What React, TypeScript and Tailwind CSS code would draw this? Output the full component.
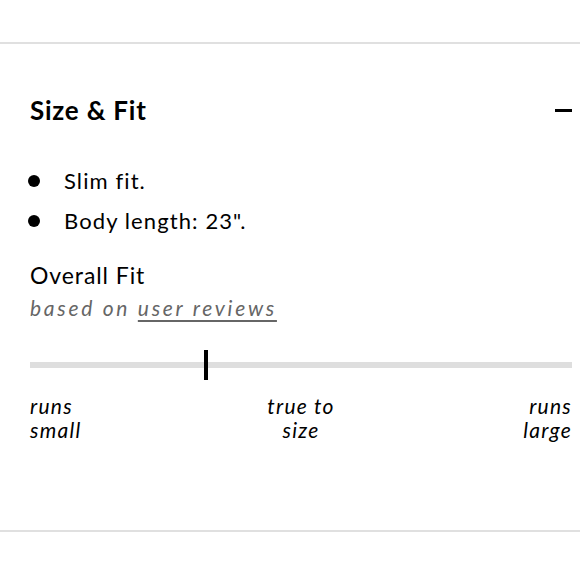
const bullets = ["Slim fit.", 'Body length: 23".'];

export default function App() {
  return (
    <div className="w-[580px] h-[580px] bg-white pt-[42px] text-black font-['Lato',sans-serif]">
      <div className="border-y-2 border-[#e0e0e0] h-[490px] pl-[30px] pr-[8px]">
        {/* header */}
        <div className="flex items-center justify-between mt-[51px] h-[30px]">
          <h2 className="text-[26px] leading-[30px] font-bold tracking-[0.03em]">Size &amp; Fit</h2>
          <div className="w-[17px] h-[3px] bg-black" />
        </div>

        {/* details */}
        <ul className="mt-[44px] flex flex-col gap-[16px]">
          {bullets.map((b) => (
            <li key={b} className="flex items-center h-[24px] text-[22px] leading-[24px] tracking-[0.05em]">
              <span className="w-[12px] h-[12px] rounded-full bg-black ml-[-2px] mr-[24px]" />
              {b}
            </li>
          ))}
        </ul>

        {/* overall fit */}
        <div className="mt-[28px] text-[23px] leading-[28px] tracking-[0.04em]">Overall Fit</div>
        <div className="mt-[7px] text-[21px] leading-[24px] italic text-[#666] tracking-[0.13em]">
          based on <span className="underline underline-offset-[4px]">user reviews</span>
        </div>

        {/* meter */}
        <div className="relative mt-[42px] h-[6px] bg-[#dedede]">
          <div className="absolute left-[174px] top-[-12px] w-[4px] h-[30px] bg-black" />
        </div>
        <div className="mt-[26px] grid grid-cols-3 text-[21px] leading-[24px] italic tracking-[0.06em]">
          <div className="text-left">runs<br />small</div>
          <div className="text-center">true to<br />size</div>
          <div className="text-right">runs<br />large</div>
        </div>
      </div>
    </div>
  );
}
